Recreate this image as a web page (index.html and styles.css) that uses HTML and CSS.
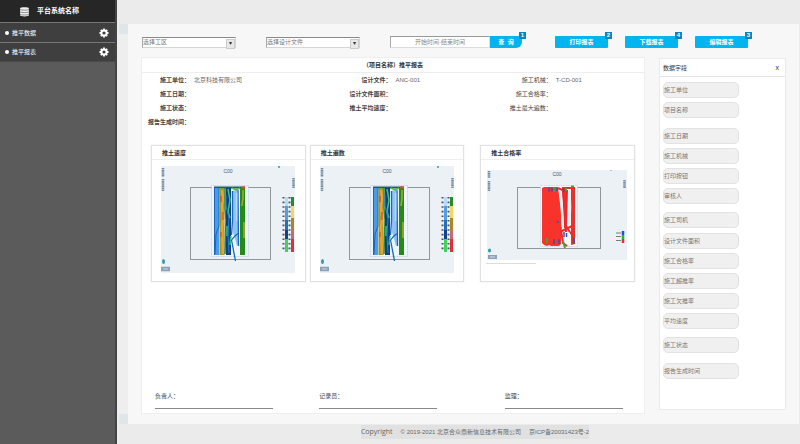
FILE: index.html
```html
<!DOCTYPE html>
<html lang="zh-CN">
<head>
  <meta charset="UTF-8">
  <meta name="viewport" content="width=device-width, initial-scale=1.0">
  <title>推平报表</title>
  <link rel="stylesheet" href="styles.css">
</head>
<body>
  <!-- shared drawings -->
  <svg class="defs" width="0" height="0">
    <symbol id="gear" viewBox="0 0 10 10">
      <circle cx="5" cy="5" r="2.600" fill="none" stroke="#fff" stroke-width="2"/>
      <path d="M5 .5v1.500M5 8v1.500M.5 5H2M8 5h1.500M1.800 1.800l1.100 1.100M7.100 7.100l1.100 1.100M8.200 1.800L7.100 2.900M2.900 7.100L1.800 8.200" stroke="#fff" stroke-width="1.800"/>
    </symbol>
    <symbol id="speed-map" viewBox="0 0 134 107">
      <rect width="134" height="107" fill="#ebf1f5"/>
      <path d="M2 2v9M2 13v12M132.500 12v10" stroke="#768da5" stroke-width="2.500" stroke-dasharray="1.600 .5"/>
      <circle cx="118" cy="1" r="1" fill="#3b95b5"/>
      <rect x="29.500" y="21.500" width="80" height="72" fill="none" stroke="#929698"/>
      <rect x="50.500" y="19.500" width="37" height="71" fill="#edf5fc" stroke="#9fb4ca" stroke-width=".5" stroke-dasharray="1 .7"/>
      <path d="M53 21.500h31" stroke="#1d5b6b" stroke-width="2"/>
      <path d="M55.500 22v67" stroke="#4a9be9" stroke-width="5"/>
      <path d="M53.500 22v67M58 22v38l-3 8-1 20" fill="none" stroke="#1767b8"/>
      <path d="M61 22v67" stroke="#8f9b31" stroke-width="5"/>
      <path d="M61 24l1 8-1 8 1 12-1 10 1 26" fill="none" stroke="#f4a02f" stroke-width="2.500"/>
      <path d="M60 30v6M62 46v8M60 66v5" stroke="#d63d20"/>
      <path d="M64 22v20l1 12-1 34" fill="none" stroke="#258844" stroke-width="1.500"/>
      <path d="M67.500 22v67" stroke="#123f84" stroke-width="5"/>
      <path d="M67 23l2 11-2 12 2 6M70 70l-1 9M66 60v10" fill="none" stroke="#35c77b" stroke-width="1.500"/>
      <path d="M65 29v11l3 12-1 17 1 18" fill="none" stroke="#2384cc"/>
      <path d="M71 25l5-1 2 54-2 2-4-14z" fill="#8fc1f4"/>
      <path d="M71.500 25v30l-1 14M77 24l.5 56M70 75q4-6 8-8M70.500 74l4 21" fill="none" stroke="#1769bb" stroke-width="1.300"/>
      <path d="M75.500 27v28" stroke="#b5d7fa" stroke-width="1.500"/>
      <path d="M81.500 22v67" stroke="#258a18" stroke-width="5"/>
      <path d="M80 21.500h4" stroke="#e44924" stroke-width="2"/>
      <path d="M82 24v8l-1 8M83 56v16" fill="none" stroke="#aaa834" stroke-width="1.500"/>
      <path d="M71 22l4 2 4-2" fill="none" stroke="#51be31" stroke-width="1.500"/>
      <!-- colour scale -->
      <path d="M122.500 31v55M128.500 31v55" stroke="#43546b" stroke-width="2" stroke-dasharray="1.600 3"/>
      <path d="M125.500 31v9" stroke="#b8dafa" stroke-width="3"/>
      <path d="M125.500 40v14" stroke="#569de4" stroke-width="3"/>
      <path d="M125.500 54v10" stroke="#286fb8" stroke-width="3"/>
      <path d="M125.500 64v9" stroke="#153e8c" stroke-width="3"/>
      <path d="M125.500 73v13" stroke="#42d45a" stroke-width="3"/>
      <path d="M131.500 31v9" stroke="#278b29" stroke-width="3"/>
      <path d="M131.500 40v12" stroke="#f5d566" stroke-width="3"/>
      <path d="M131.500 52v12" stroke="#ad8628" stroke-width="3"/>
      <path d="M131.500 64v9" stroke="#bf6f75" stroke-width="3"/>
      <path d="M131.500 73v13" stroke="#e02f37" stroke-width="3"/>
      <ellipse cx="2.500" cy="95.500" rx="1.500" ry="2.500" fill="#369aae"/>
      <path d="M0 103h9" stroke="#8da1b9" stroke-width="4.500"/>
      <path d="M2 103h5" stroke="#c7d4e4"/>
    </symbol>
  </svg>

  <div class="layout">
    <aside class="sidebar">
      <div class="brand">
        <svg class="brand-icon" viewBox="0 0 10 10">
          <path d="M1 2C1 .7 9 .7 9 2v6.500C9 9.800 1 9.800 1 8.500z" fill="#eee"/>
          <path d="M1 3.200c1.500.8 6.500.8 8 0M1 5.400c1.500.8 6.500.8 8 0M1 7.600c1.500.8 6.500.8 8 0" fill="none" stroke="#444" stroke-width=".5"/>
        </svg>
        <span>平台系统名称</span>
      </div>
      <nav>
        <a class="nav-item" href="#"><i class="dot"></i>推平数据<svg class="gear" viewBox="0 0 10 10"><use href="#gear"/></svg></a>
        <a class="nav-item" href="#"><i class="dot"></i>推平报表<svg class="gear" viewBox="0 0 10 10"><use href="#gear"/></svg></a>
      </nav>
    </aside>

    <div class="main">
      <main class="content">
        <form class="toolbar">
          <span class="select-box">
            <select aria-label="选择工区"><option>选择工区</option></select>
          </span>
          <span class="select-box">
            <select aria-label="选择设计文件"><option>选择设计文件</option></select>
          </span>
          <div class="search">
            <input type="text" aria-label="时间" placeholder="开始时间-结束时间">
            <button type="button" class="btn btn-query">查&nbsp; 询<span class="badge">1</span></button>
          </div>
          <div class="actions">
            <button type="button" class="btn">打印报表<span class="badge">2</span></button>
            <button type="button" class="btn">下载报表<span class="badge">4</span></button>
            <button type="button" class="btn">编辑报表<span class="badge">3</span></button>
          </div>
        </form>

        <div class="columns">
          <section class="report">
            <h1>（项目名称）推平报表</h1>
            <div class="info">
              <b>施工单位：</b><span>北京科技有限公司</span>
              <b>设计文件：</b><span>ANC-001</span>
              <b class="light">施工机械：</b><span>T-CD-001</span>
              <b>施工日期：</b><span></span>
              <b>设计文件面积：</b><span></span>
              <b class="light">施工合格率：</b><span></span>
              <b>施工状态：</b><span></span>
              <b>推土平均速度：</b><span></span>
              <b class="light">推土最大遍数：</b><span></span>
              <b>报告生成时间：</b><span></span>
            </div>

            <div class="cards">
              <article class="card">
                <h2>推土速度</h2>
                <svg class="map" viewBox="0 0 134 107">
                  <use href="#speed-map"/>
                  <text class="map-text" x="67" y="7" text-anchor="middle">C00</text>
                </svg>
              </article>
              <article class="card">
                <h2>推土遍数</h2>
                <svg class="map" viewBox="0 0 134 107">
                  <use href="#speed-map"/>
                  <text class="map-text" x="67" y="7" text-anchor="middle">C00</text>
                </svg>
              </article>
              <article class="card card-rate">
                <h2>推土合格率</h2>
                <svg class="map" viewBox="0 0 140 90">
                  <rect width="140" height="90" fill="#ebf1f5"/>
                  <path d="M2 1v7M2 11v10M137.500 10v8" stroke="#768da5" stroke-width="2.500" stroke-dasharray="1.600 .5"/>
                  <circle cx="124" cy=".5" r=".5" fill="#3b95b5"/>
                  <text class="map-text" x="70" y="6" text-anchor="middle">C00</text>
                  <rect x="30.500" y="17.500" width="83" height="61" fill="none" stroke="#929698"/>
                  <rect x="53.500" y="15.500" width="37" height="61" fill="#f6f9fc" stroke="#a9bcd0" stroke-width=".5" stroke-dasharray="1 .7"/>
                  <path d="M55 18l2-1h14l3 24 1 17-1 5v11l-2 2h-8l-2-1-2 1-3-1-2-2z" fill="#f8332c"/>
                  <path d="M75 17h5v41h-3zM84 17h4v57l-4 1z" fill="#ea302b"/>
                  <path d="M71 18l4 2 5-2h7M76 21l3 41M80 20l-1 36 5 8M74 60l2 13 4 3M75 61l10-5" fill="none" stroke="#ee2828" stroke-width="2"/>
                  <path d="M73 21q2.500 16 2.500 36M82.500 20q1 16 0 34" fill="none" stroke="#e8f0f6" stroke-width="2.500"/>
                  <path d="M79 67l4-5v13h-3z" fill="#f3f7fa"/>
                  <path d="M62 17.500v4M65 17.500v4M70 18v3M76.500 18v4M77 62v5M79.500 63v4M67 69v5M72 69v5M87 68v5M71 51v2" stroke="#374eb4" stroke-width="1.500"/>
                  <path d="M67.500 17v5M79 18v3M60 68v5M84 16.500h3M76 71l2 7" fill="none" stroke="#5b982d" stroke-width="2"/>
                  <path d="M129 63h5M129 66.500h5M129 70.500h5" stroke="#6f807d"/>
                  <path d="M136 61v4" stroke="#204bf3" stroke-width="2.500"/>
                  <path d="M136 65v4" stroke="#23b43b" stroke-width="2.500"/>
                  <path d="M136 69v4" stroke="#f52929" stroke-width="2.500"/>
                  <ellipse cx="2.500" cy="80.500" rx="1.500" ry="2" fill="#369aae"/>
                  <path d="M1 87h9" stroke="#8da1b9" stroke-width="4"/>
                  <path d="M3 87h5" stroke="#d4deea"/>
                </svg>
                <hr>
              </article>
            </div>

            <div class="signatures">
              <div><span>负责人：</span></div>
              <div><span>记录员：</span></div>
              <div><span>监理：</span></div>
            </div>
          </section>

          <aside class="fields">
            <header>
              <h2>数据字段</h2>
              <button type="button" class="close" aria-label="关闭">x</button>
            </header>
            <div class="field-list">
              <button type="button" class="field">施工单位</button>
              <button type="button" class="field">项目名称</button>
              <button type="button" class="field gap-l">施工日期</button>
              <button type="button" class="field">施工机械</button>
              <button type="button" class="field">打印按钮</button>
              <button type="button" class="field">审核人</button>
              <button type="button" class="field gap-m">施工司机</button>
              <button type="button" class="field gap-s">设计文件面积</button>
              <button type="button" class="field">施工合格率</button>
              <button type="button" class="field">施工超推率</button>
              <button type="button" class="field">施工欠推率</button>
              <button type="button" class="field">平均速度</button>
              <button type="button" class="field gap-m">施工状态</button>
              <button type="button" class="field gap-l">报告生成时间</button>
            </div>
          </aside>
        </div>
      </main>

      <footer class="footer">
        <p><span class="copy">Copyright</span><span>© 2019-2021 北京合众鼎新信息技术有限公司</span><span>京ICP备20031423号-2</span></p>
      </footer>
    </div>
  </div>
</body>
</html>
```
FILE: styles.css
```css
* { box-sizing: border-box; }
body { margin: 0; font: 6px/14px "Liberation Sans", "Noto Sans CJK SC", sans-serif; color: #444; background: #ebebeb; }
h1, h2, p { margin: 0; font-size: 6px; }
button, input, select { margin: 0; padding: 0; font: inherit; color: inherit; border: 0; }
svg { display: block; }
.defs { position: absolute; }

.layout { display: flex; min-height: 100vh; }

/* sidebar */
.sidebar { width: 117px; flex: none; background: #5b5b5b; border-right: 2px solid #444; }
.brand { display: flex; align-items: center; gap: 7px; height: 22px; padding-left: 19px; background: #262626; color: #fff; font-size: 7px; font-weight: bold; }
.brand-icon { width: 11px; height: 11px; }
.nav-item { display: flex; align-items: center; height: 20px; padding: 0 6px 0 5px; background: #3f3f3f; border-top: 1px solid #777; color: #fff; text-decoration: none; }
.nav-item:last-child { border-bottom: 1px solid #4a4a4a; }
.dot { width: 4px; height: 4px; margin-right: 3px; border-radius: 50%; background: #fff; }
.gear { width: 10px; height: 10px; margin-left: auto; }

/* page */
.main { flex: 1; display: flex; flex-direction: column; padding-top: 24px; }
.content { flex: 1; display: flex; flex-direction: column; margin-right: 1px; padding: 12px 13px 10px; border-left: 11px solid #eee; background: #f7f7f7; position: relative; }
.content::before, .content::after { content: ""; position: absolute; left: -9px; width: 9px; height: 10px; background: #dfe6e9; }
.content::before { top: 0; }
.content::after { bottom: 0; }

.toolbar { display: flex; align-items: center; gap: 30px; height: 12px; padding-left: 1px; margin-bottom: 9px; }
.select-box { position: relative; width: 94px; height: 11px; }
.select-box select { display: block; width: 100%; height: 100%; appearance: none; background: #fff; border: 1px solid #d5d5d5; border-top-color: #8a8a8a; border-left-color: #aaa; color: #777; line-height: 9px; }
.select-box::after { content: "▾"; position: absolute; top: 2px; right: 1px; width: 7px; height: 8px; background: #e8e8e8; border: 1px solid #ccc; color: #333; text-align: center; line-height: 6px; pointer-events: none; }
.search { display: flex; height: 12px; }
.search input { width: 100px; background: #fff; border: 1px solid #ddd; border-top-color: #999; border-left-color: #aaa; text-align: center; }
.search input::placeholder { color: #888; opacity: 1; }
.btn { position: relative; width: 53px; height: 12px; border-radius: 1px; background: #02b5ef; color: #fff; font-weight: bold; line-height: 12px; cursor: pointer; }
.btn-query { width: 32px; border-radius: 0 1px 6px 0; }
.badge { position: absolute; top: -4px; right: -4px; width: 7px; height: 7px; background: #0d83b7; line-height: 7px; text-align: center; }
.actions { display: flex; gap: 17px; margin-left: 3px; }

.columns { flex: 1; display: flex; gap: 14px; }

/* report */
.report { flex: 1; display: flex; flex-direction: column; background: #fff; border: 1px solid #eee; }
.report h1 { height: 15px; border-bottom: 1px solid #eee; line-height: 14px; text-align: center; color: #333; }
.info { display: grid; grid-template-columns: 48px 142fr 51px 100fr 52px 88fr; column-gap: 4px; }
.info b { text-align: right; white-space: nowrap; }
.info .light { font-weight: normal; }
.info span { color: #666; }

.cards { display: flex; gap: 4px; padding: 0 9px; margin-top: 16px; }
.card { flex: 1; height: 137px; border: 1px solid #e2e2e2; box-shadow: 0 0 1px #ddd; }
.card h2 { height: 14px; padding-left: 10px; border-bottom: 1px solid #eee; color: #333; }
.card .map { width: 134px; height: 107px; margin: 6px auto 0 9px; }
.card-rate { margin-left: 12px; }
.card-rate .map { width: 140px; height: 90px; margin: 10px auto 0 6px; }
.card-rate hr { width: 50px; margin: 3px 0 0 5px; border: 0; border-top: 1px solid #ddd; }
.map-text { font-size: 5px; fill: #3f6276; }

.signatures { display: grid; grid-template-columns: 164fr 185fr 139fr; margin-top: auto; padding: 0 0 4px 13px; }
.signatures div { width: 118px; height: 20px; border-bottom: 1px solid #888; }

/* data fields */
.fields { width: 127px; flex: none; margin-top: 1px; margin-bottom: 4px; background: #fff; border: 1px solid #eaeaea; }
.fields header { display: flex; justify-content: space-between; align-items: center; height: 18px; padding: 0 6px 0 3px; border-bottom: 1px solid #e5e5e5; }
.fields h2 { font-weight: normal; color: #333; }
.close { background: none; color: #333; font-size: 7px; }
.field-list { display: flex; flex-direction: column; gap: 4px; padding: 5px 3px; }
.field { width: 76px; height: 16px; border: 1px solid #e2e2e2; border-radius: 5px; background: #f0f0f0; color: #777; text-align: left; line-height: 14px; }
.gap-s { margin-top: 1px; }
.gap-m { margin-top: 4px; }
.gap-l { margin-top: 6px; }

.footer { height: 20px; padding: 1px 0 0 33px; }
.footer p { display: flex; gap: 8px; width: max-content; margin: 0 auto; background: #e1e1e1; color: #666; }
.footer .copy { font-family: "Open Sans", sans-serif; font-size: 7px; }
```
